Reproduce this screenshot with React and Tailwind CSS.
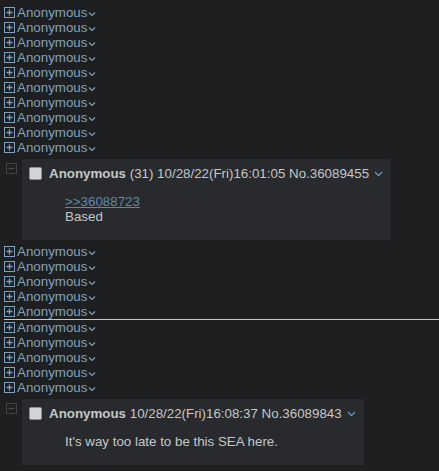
import React from "react";

const BLUE = "#81a2be";

function PlusBox() {
  return (
    <svg width="11" height="11" viewBox="0 0 11 11" className="shrink-0 mr-[2px]">
      <rect x="0.5" y="0.5" width="10" height="10" fill="none" stroke={BLUE} strokeWidth="1" />
      <path d="M2.5 5.5h6M5.5 2.5v6" stroke={BLUE} strokeWidth="1.3" />
    </svg>
  );
}

function MinusBox() {
  return (
    <svg width="11" height="11" viewBox="0 0 11 11">
      <rect x="0.5" y="0.5" width="10" height="10" fill="none" stroke="#3f4448" strokeWidth="1" />
      <path d="M2.5 5.5h6" stroke="#4a5055" strokeWidth="1.2" />
    </svg>
  );
}

function SmallChevron() {
  return (
    <svg width="8" height="6" viewBox="0 0 8 6" className="mt-[3px] ml-[1px]">
      <path d="M1 1.5l3 3 3-3" fill="none" stroke={BLUE} strokeWidth="1.2" />
    </svg>
  );
}

function PostChevron() {
  return (
    <svg width="9" height="6" viewBox="0 0 9 6" className="ml-[5px]">
      <path d="M1 1l3.5 3.5L8 1" fill="none" stroke="#6f95b8" strokeWidth="1.3" />
    </svg>
  );
}

function Stub() {
  return (
    <div className="flex items-center h-[15px] text-[#81a2be]">
      <PlusBox />
      <span>Anonymous</span>
      <SmallChevron />
    </div>
  );
}

function Post({ info, children }) {
  return (
    <div className="flex items-start mt-[4px] -ml-[4px]">
      <div className="w-[22px] pl-[6px] pt-[4px] shrink-0">
        <MinusBox />
      </div>
      <div className="bg-[#282a2e] pt-[7px] pb-[3px] pl-[7px] pr-[8px]">
        <div className="flex items-center h-[15px] text-[#c5c8c6] whitespace-nowrap">
          <div className="w-[13px] h-[13px] bg-[#d4d4d4] border border-[#909090] rounded-[2px] shrink-0 mr-[7px]" />
          <span className="font-bold">Anonymous</span>
          <span>&nbsp;{info}</span>
          <PostChevron />
        </div>
        <div className="mt-[13px] mb-[13px] ml-[36px] text-[#c5c8c6]">{children}</div>
      </div>
    </div>
  );
}

export default function App() {
  return (
    <div
      className="w-[439px] h-[471px] overflow-hidden bg-[#1d1f21] pt-[5px] pl-[4px] text-[13.33px] leading-[15px]"
      style={{ fontFamily: '"Liberation Sans", Arial, sans-serif' }}
    >
      {Array.from({ length: 10 }).map((_, i) => (
        <Stub key={"a" + i} />
      ))}
      <Post info="(31) 10/28/22(Fri)16:01:05 No.36089455">
        <div>
          <a className="text-[#5f89ac] underline">&gt;&gt;36088723</a>
        </div>
        <div>Based</div>
      </Post>
      <div className="mt-[4px]">
        {Array.from({ length: 5 }).map((_, i) => (
          <Stub key={"b" + i} />
        ))}
      </div>
      <div className="h-[1px] bg-[#c5c8c6]" />
      {Array.from({ length: 5 }).map((_, i) => (
        <Stub key={"c" + i} />
      ))}
      <Post info="10/28/22(Fri)16:08:37 No.36089843">
        <div>It's way too late to be this SEA here.</div>
      </Post>
    </div>
  );
}
